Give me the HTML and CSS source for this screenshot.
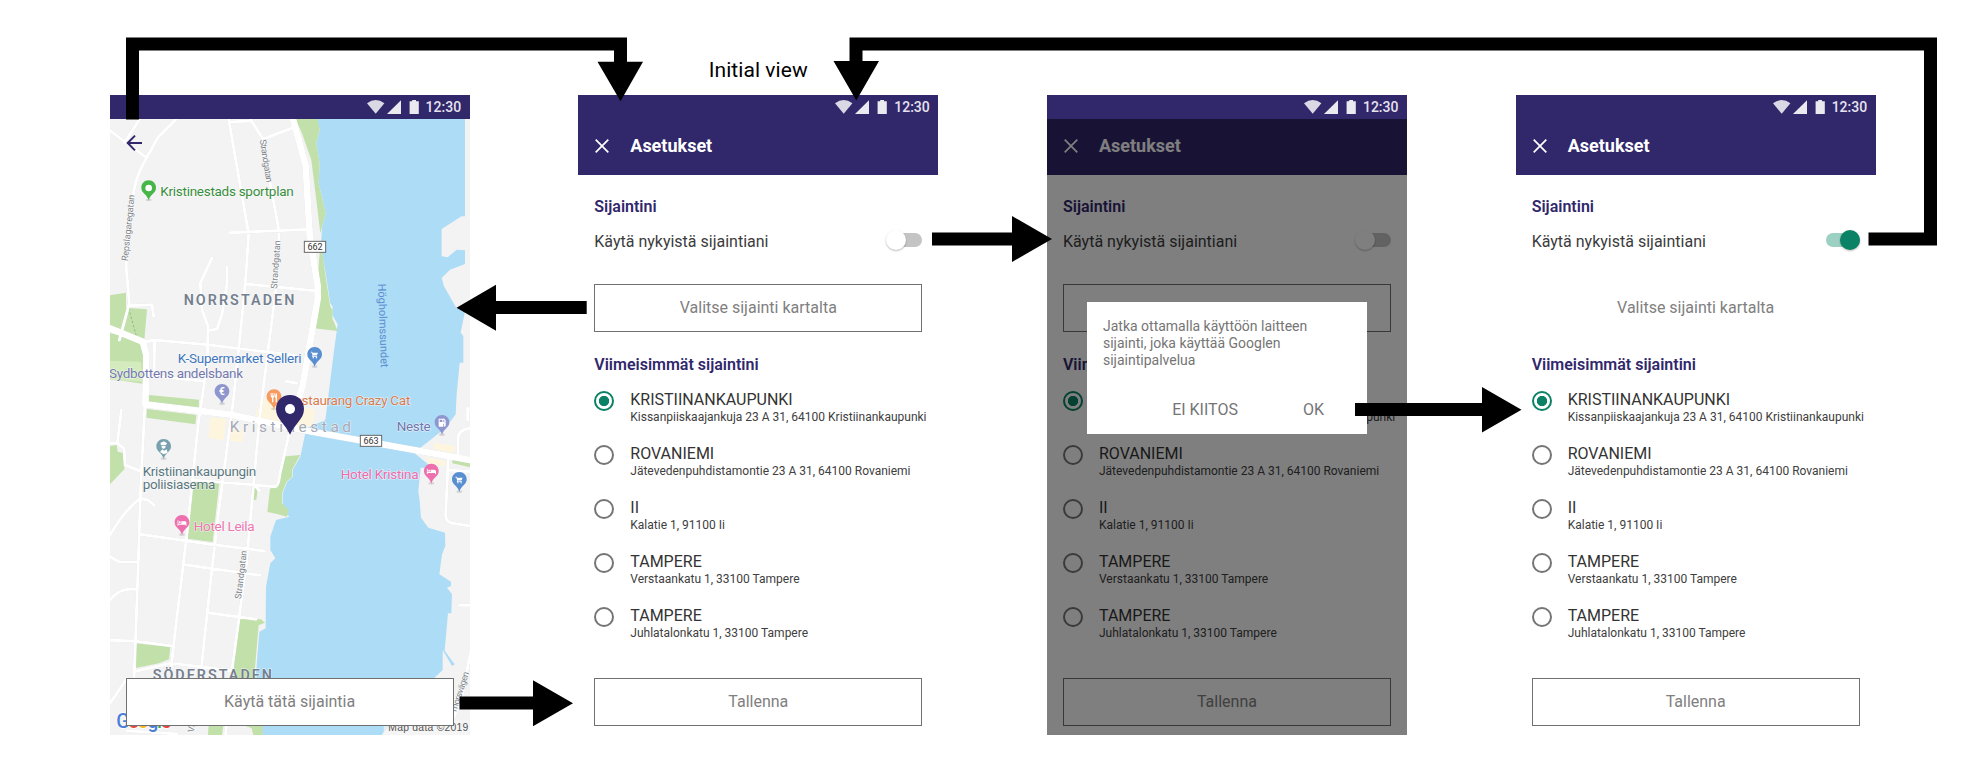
FILE: index.html
```html
<!DOCTYPE html>
<html lang="fi">
<head>
<meta charset="utf-8">
<title>Asetukset – Initial view</title>
<link rel="stylesheet" href="styles.css">
</head>
<body>
<svg width="0" height="0" class="defs">
  <defs>
    <symbol id="status" viewBox="0 0 52 14">
      <path d="M0 3.2Q8.7-3 17.4 3.2L8.7 13.7z" fill="#fff" opacity=".82"/>
      <path d="M20 14L34 .3V14z" fill="#fff" opacity=".9"/>
      <path d="M42.6 1.2h2.600V0h3.800v1.200h2.800V14h-9.200z" fill="#fff" opacity=".9"/>
    </symbol>
    <symbol id="close" viewBox="0 0 14 14"><path d="M.7.7l12.6 12.6M13.3.7L.7 13.3" stroke="#fff" stroke-width="1.7" fill="none"/></symbol>
    <symbol id="poi" viewBox="0 0 46 64" overflow="visible"><ellipse cx="23" cy="60" rx="9" ry="4" fill="#000" opacity=".12"/><path d="M23 1C10 1 1 11 1 23c0 17 17 19 22 38C28 42 45 40 45 23 45 11 36 1 23 1z"/></symbol>
    <symbol id="cart" viewBox="0 0 24 24"><path d="M1 3h4l1.500 3H22l-3.500 8H8.500L8 16h12v2H5l1.500-4.500L3.500 5H1z" fill="#fff"/><circle cx="8.500" cy="20.500" r="2" fill="#fff"/><circle cx="17.500" cy="20.500" r="2" fill="#fff"/></symbol>
    <symbol id="bed" viewBox="0 0 28 18"><path d="M0 1h3v10h9V4h11q5 0 5 5v8h-3v-3H3v3H0z" fill="#fff"/><circle cx="7.500" cy="7" r="3" fill="#fff"/></symbol>
  </defs>
</svg>

<main class="board">
  <section class="phone phone-map">
    <svg class="map" viewBox="29 297 1080 1848" preserveAspectRatio="none">
      <rect x="29" y="297" width="1080" height="1848" fill="#f3f3f3"/>
      <path class="water" d="M650 297l8 33-10 40 10 60-3 60 21 90-11 40-3 60 14 80 14 90 7 10-1 25 16 28-12 87-15 120-10 80-57 25-18 85-23 40v20l-17 17-13 33v50l20 20-40 10-17 50v40l15 25-15 15-13 70-1 125-19 10-10 125 22 205h348l10-25 143-155 37-35 0-60 28 48 8-5-30-41 10-112h10l2-57-15-20 12-5v-13l-35-22 8-60 10-25-1-40-50-15-22-30-4-50-4-30 7-70 35 0-55-45 45-35 50-40 30-40 3-60 9-95h11v-80l-8-10 15-74h-28l-37-65-7-25 25-25 45-17v-41l-25-2-27 23-18-3v-82l60-38h10V297z"/>
      <g class="park">
        <path d="M585 297h67l6 33-10 40 10 60-3 60 21 90-11 40-5 20-12-100-15-120-28-80zM661 660l15 110 14 90 7 10-1 25 16 38-72-8z"/>
        <path d="M29 826l48-8v45l63 5-8 92-60-25-43-10zM29 940l60 12 45 30-2 110-103-15zM146 1125l150 14-1 25-150-16zM140 1167l148 18-3 28-147-20zM29 1278l20-3 3 20 20 5v48l-43 45zM275 1383l82 5-20 178-76-10zM455 1397l18 3-5 40-15-2zM555 1309l45-4-25 45v20l-17 17-13 33v30l20 20-5 20-30-8-29-6 8-70 25-10z"/>
        <path d="M106 1870l104 10-4 38-30 12-70 14zM412 1795l70 3 12 10-19 8-12 140 24 150v39h-28l-5-20-27-10-30-160z"/>
        <path d="M325 2110h45l-5 35h-42zM1056 1320l54 10v12l-54-12z"/>
      </g>
      <path d="M29 1022l93 3 6 60-99-5z" fill="#d3ebbd"/>
      <path d="M484 1135l162 35-12 48-80 12-95-30zM330 1192l48 4-8 65-45-7zM395 1228l35 4-3 35-40-5zM1000 1268l65 10-5 22-60-12zM980 1312l58 12-5 15-50-5z" fill="#fdf5dd"/>
      <path d="M85 865l25 90" stroke="#8fbb7b" stroke-width="3" stroke-dasharray="7 6" fill="none"/>
      <g class="road">
        <path d="M118 297L73 368M29 332l105 78M228 297l-55 55-43 78q-28 50-33 110-24 170-18 220l8 90-30 110M385 297l60 345-8 120-8 90-30 290-45 340-23 200-32 300M450 297l38 60 88-33M388 306l60-3M488 357l20 125 28 150-3 130-30 230-25 200-40 440-42 310-25 250M388 638l245-10M335 714l-35 75 5 80 18 50-2 110-27 180-35 340-35 290-12 110M380 742v50l-15 90-15 45-28 5M438 792l205 20M85 857l70-3 5 35M130 966l33-6 160 14 260 32M163 960l-2 108 145 15M134 1150l-12 230-10 300-12 330M63 1170l-12 100 20 15 3 50 45 18M29 1270h20M557 1084l33 6M275 1380l250 20q10-2 14-40l30-130M119 1435l25 6 18 15M119 1435q-50 40-90 110M119 1543l210 30 163 20M254 1634l225 32M29 1610l28 16h56M29 1740q30-38 75-32M29 1861l70 2 113 14M100 1955l110-25 90 10 95 12M322 1778l145 20M80 1975l-51 75M467 1400l10 12M1044 1310l-8 175q0 20 20 25l54 8M1110 1225q-40 5-37 35v55M1046 1350l64 5M1078 1756h32M1110 1900l-25 130-30 75M80 2132l150 10M1110 1170l-8-5v35"/>
        <path class="r-main" d="M578 297l38 140 12 210 24 150v40l-45 260-40 130"/>
        <path class="r-main" d="M29 925l98 40 11 40-3 148 250 30 250 52 475 85"/>
      </g>
      <g class="labels">
        <text class="street" transform="translate(478 360) rotate(81)" textLength="130">Strandgatan</text>
        <text class="street" transform="translate(82 724) rotate(-84)" textLength="200">Repslagaregatan</text>
        <text class="street" transform="translate(530 807) rotate(-86)" textLength="146">Strandgatan</text>
        <text class="street" transform="translate(422 1738) rotate(-83)" textLength="146">Strandgatan</text>
        <text class="street" transform="translate(1068 2076) rotate(-72)" textLength="124">morsvägen</text>
        <text class="street" transform="translate(280 2138) rotate(-80)">Vä</text>
        <text class="sea" transform="translate(833 791) rotate(88)" textLength="252">Högholmssundet</text>
        <text x="180" y="527" fill="#388e3c" textLength="400">Kristinestads sportplan</text>
        <text class="area" x="250" y="854" textLength="332">NORRSTADEN</text>
        <text class="area" x="157" y="1980" textLength="358">SÖDERSTADEN</text>
        <text x="232" y="1028" fill="#3f76bd" textLength="372">K-Supermarket Selleri</text>
        <text x="26" y="1074" fill="#7478ae" textLength="402">Sydbottens andelsbank</text>
        <text x="559" y="1154" fill="#d77c50" textLength="371">Restaurang Crazy Cat</text>
        <text x="388" y="1237" class="city" textLength="364">Kristinestad</text>
        <text x="889" y="1232" fill="#7076ad" textLength="102">Neste</text>
        <text x="127" y="1368" fill="#5b7880" textLength="341">Kristiinankaupungin</text>
        <text x="127" y="1407" fill="#5b7880" textLength="218">poliisiasema</text>
        <text x="721" y="1378" fill="#ec6ba9" textLength="234">Hotel Kristina</text>
        <text x="280" y="1532" fill="#ec77b1" textLength="183">Hotel Leila</text>
      </g>
      <g class="shields">
        <rect x="612" y="664" width="64" height="33"/><text x="644" y="690">662</text>
        <rect x="780" y="1246" width="64" height="33"/><text x="812" y="1272">663</text>
      </g>
      <use href="#poi" x="122" y="480" width="46" height="64" fill="#47b648"/><circle cx="145" cy="504" r="10" fill="#fff"/>
      <use href="#poi" x="620" y="980" width="46" height="64" fill="#598fd0"/><use href="#cart" x="630" y="992" width="25" height="25"/>
      <use href="#poi" x="342" y="1091" width="46" height="64" fill="#8f96ce"/><text class="euro" x="365" y="1125">€</text>
      <use href="#poi" x="498" y="1107" width="46" height="64" fill="#f89b60"/><path d="M511 1119v8q0 5 4 6v14h4v-14q4-1 4-6v-8h-3v8h-2v-8h-2v8h-2v-8zM526 1133v14h4v-28q-6 2-6 14z" fill="#fff"/>
      <use href="#poi" x="1002" y="1184" width="46" height="64" fill="#8f96ce"/><path fill-rule="evenodd" d="M1015 1196h14v9l3 3v-7l-4-4 2-2 6 6v16q-1 4-5 2v-8h-2v9h-14zm3 3v7h8v-7z" fill="#fff"/>
      <use href="#poi" x="167" y="1256" width="46" height="64" fill="#78a0ae"/><path d="M180 1269l11-5 9 6-3 5h-15zM183 1277h13q0 9-7 9-6-1-6-9zM179 1296l7-8 5 4 8-4 3 10-12 5z" fill="#fff"/>
      <use href="#poi" x="970" y="1330" width="46" height="64" fill="#ed70af"/><use href="#bed" x="979" y="1345" width="28" height="18"/>
      <use href="#poi" x="1054" y="1355" width="46" height="64" fill="#598fd0"/><use href="#cart" x="1064" y="1367" width="25" height="25"/>
      <use href="#poi" x="222" y="1484" width="46" height="64" fill="#ed70af"/><use href="#bed" x="231" y="1500" width="28" height="18"/>
      <path d="M569 1125c-24 0-42 18-42 42 0 30 27 43 42 77 15-34 42-47 42-77 0-24-18-42-42-42z" fill="#31276b"/><circle cx="569" cy="1167" r="15" fill="#fff"/>
      <text class="logo" x="48" y="2124" textLength="164"><tspan fill="#4a7fd8">G</tspan><tspan fill="#e5453a">o</tspan><tspan fill="#f4b821">o</tspan><tspan fill="#4a7fd8">g</tspan><tspan fill="#3ba457">l</tspan><tspan fill="#e5453a">e</tspan></text>
      <rect x="850" y="2100" width="259" height="45" fill="#f5f5f5" opacity=".7"/>
      <text class="credit" x="864" y="2134" textLength="240">Map data ©2019</text>
      <path d="M125 369H81M104 347l-22 22 22 22" stroke="#31276b" stroke-width="6" fill="none"/>
    </svg>
    <header class="status"><svg><use href="#status"/></svg><span>12:30</span></header>
    <div class="map-foot"><button class="btn">Käytä tätä sijaintia</button></div>
  </section>

  <section class="phone">
    <header class="status"><svg><use href="#status"/></svg><span>12:30</span></header>
    <div class="appbar"><svg><use href="#close"/></svg><h1>Asetukset</h1></div>
    <div class="content">
      <h2>Sijaintini</h2>
      <div class="row"><span>Käytä nykyistä sijaintiani</span><i class="toggle"></i></div>
      <button class="btn pick">Valitse sijainti kartalta</button>
      <h2>Viimeisimmät sijaintini</h2>
      <ul class="places">
        <li><i class="radio on"></i><div><b>KRISTIINANKAUPUNKI</b><small>Kissanpiiskaajankuja 23 A 31, 64100 Kristiinankaupunki</small></div></li>
        <li><i class="radio"></i><div><b>ROVANIEMI</b><small>Jätevedenpuhdistamontie 23 A 31, 64100 Rovaniemi</small></div></li>
        <li><i class="radio"></i><div><b>II</b><small>Kalatie 1, 91100 Ii</small></div></li>
        <li><i class="radio"></i><div><b>TAMPERE</b><small>Verstaankatu 1, 33100 Tampere</small></div></li>
        <li><i class="radio"></i><div><b>TAMPERE</b><small>Juhlatalonkatu 1, 33100 Tampere</small></div></li>
      </ul>
      <button class="btn">Tallenna</button>
    </div>
  </section>

  <section class="phone">
    <header class="status"><svg><use href="#status"/></svg><span>12:30</span></header>
    <div class="appbar"><svg><use href="#close"/></svg><h1>Asetukset</h1></div>
    <div class="content">
      <h2>Sijaintini</h2>
      <div class="row"><span>Käytä nykyistä sijaintiani</span><i class="toggle"></i></div>
      <button class="btn pick"></button>
      <h2>Viimeisimmät sijaintini</h2>
      <ul class="places">
        <li><i class="radio on"></i><div><b>KRISTIINANKAUPUNKI</b><small>Kissanpiiskaajankuja 23 A 31, 64100 Kristiinankaupunki</small></div></li>
        <li><i class="radio"></i><div><b>ROVANIEMI</b><small>Jätevedenpuhdistamontie 23 A 31, 64100 Rovaniemi</small></div></li>
        <li><i class="radio"></i><div><b>II</b><small>Kalatie 1, 91100 Ii</small></div></li>
        <li><i class="radio"></i><div><b>TAMPERE</b><small>Verstaankatu 1, 33100 Tampere</small></div></li>
        <li><i class="radio"></i><div><b>TAMPERE</b><small>Juhlatalonkatu 1, 33100 Tampere</small></div></li>
      </ul>
      <button class="btn">Tallenna</button>
    </div>
    <div class="scrim">
      <div class="dialog">
        <p>Jatka ottamalla käyttöön laitteen sijainti, joka käyttää Googlen sijaintipalvelua</p>
        <div class="actions"><span>EI KIITOS</span><span>OK</span></div>
      </div>
    </div>
  </section>

  <section class="phone">
    <header class="status"><svg><use href="#status"/></svg><span>12:30</span></header>
    <div class="appbar"><svg><use href="#close"/></svg><h1>Asetukset</h1></div>
    <div class="content">
      <h2>Sijaintini</h2>
      <div class="row"><span>Käytä nykyistä sijaintiani</span><i class="toggle on"></i></div>
      <button class="btn pick plain">Valitse sijainti kartalta</button>
      <h2>Viimeisimmät sijaintini</h2>
      <ul class="places">
        <li><i class="radio on"></i><div><b>KRISTIINANKAUPUNKI</b><small>Kissanpiiskaajankuja 23 A 31, 64100 Kristiinankaupunki</small></div></li>
        <li><i class="radio"></i><div><b>ROVANIEMI</b><small>Jätevedenpuhdistamontie 23 A 31, 64100 Rovaniemi</small></div></li>
        <li><i class="radio"></i><div><b>II</b><small>Kalatie 1, 91100 Ii</small></div></li>
        <li><i class="radio"></i><div><b>TAMPERE</b><small>Verstaankatu 1, 33100 Tampere</small></div></li>
        <li><i class="radio"></i><div><b>TAMPERE</b><small>Juhlatalonkatu 1, 33100 Tampere</small></div></li>
      </ul>
      <button class="btn">Tallenna</button>
    </div>
  </section>

  <svg class="arrows" viewBox="0 0 1985 775">
    <g fill="none" stroke="#000" stroke-width="13">
      <path d="M132.500 119.500V44H620.500V63"/>
      <path d="M1868.500 239H1930.500V44H856V63"/>
      <path d="M932 239H1014M586.700 307.500H494M459.500 703H535M1355 409.500H1484"/>
    </g>
    <path d="M597.500 61.700h45.500l-22.500 39.500zM833.500 61h45.500l-22.700 39.500zM1012 216l40 23-40 23zM496 284.700l-39.500 23 39.500 23zM533 680.300l40 23-40 23zM1482 387l39.500 22.700-39.500 22.800z"/>
    <text x="708.700" y="77" textLength="99">Initial view</text>
  </svg>
</main>
</body>
</html>
```

FILE: styles.css
```css
* { box-sizing: border-box; }
body { margin: 0; background: #fff; font-family: Roboto, "Liberation Sans", sans-serif; }
.defs { position: absolute; }
.board { position: relative; width: 1985px; height: 775px; padding: 95px 0 0 109.600px; display: flex; gap: 108.700px; overflow: hidden; }
.phone { position: relative; flex: none; width: 360px; height: 640px; display: flex; flex-direction: column; background: #fff; }
.status { position: relative; height: 24px; flex: none; background: #31276b; display: flex; justify-content: flex-end; align-items: center; padding-right: 8.500px; gap: 7px; color: #e6e3ee; font-size: 14px; font-weight: 500; }
.status svg { width: 52px; height: 14px; }
.appbar { height: 56px; flex: none; background: #31276b; display: flex; align-items: center; padding: 0 17px; padding-bottom: 2px; gap: 21px; color: #fff; }
.appbar svg { width: 14px; height: 14px; }
.appbar h1 { margin: 0; font-size: 18px; line-height: 24px; font-weight: 700; }
.content { flex: 1; display: flex; flex-direction: column; padding: 20px 16px 9px; }
h2 { margin: 0; font-size: 16px; line-height: 24px; font-weight: 600; color: #31276b; }
.row { display: flex; justify-content: space-between; align-items: center; height: 24px; margin-top: 10px; font-size: 16px; color: #3c3c3c; }
.toggle { position: relative; width: 34px; height: 14px; margin-bottom: 2px; border-radius: 7px; background: #c4c4c4; }
.toggle::after { content: ""; position: absolute; left: -2px; top: -3px; width: 20px; height: 20px; border-radius: 50%; background: #fff; box-shadow: 0 1px 2px rgba(0,0,0,.28); }
.toggle.on { background: #9bd0c2; }
.toggle.on::after { left: 14px; background: #0b8265; }
.btn { width: 328px; height: 48px; flex: none; border: 1px solid #707070; background: #fff; padding: 0; font: 400 16px/24px Roboto, sans-serif; color: #808080; }
.btn.pick { margin: 31px 0 21px; }
.btn.plain { border-color: transparent; }
.places { list-style: none; margin: 13px 0 36px; padding: 0; display: flex; flex-direction: column; gap: 18px; }
.places li { display: flex; gap: 16px; height: 36px; }
.places div { display: flex; flex-direction: column; white-space: nowrap; }
.places b { font-size: 16px; line-height: 20px; font-weight: 400; color: #333; }
.places small { font-size: 12px; line-height: 14px; color: #404040; }
.radio { width: 20px; height: 20px; margin-top: 1px; border: 2px solid #757575; border-radius: 50%; flex: none; }
.radio.on { border-color: #0b8265; background: radial-gradient(circle, #0b8265 4.800px, transparent 5.500px); }
.scrim { position: absolute; inset: 24px 0 0; background: rgba(0,0,0,.5); display: flex; justify-content: center; padding-top: 183px; }
.dialog { width: 280px; height: 132px; background: #fff; padding: 16px; display: flex; flex-direction: column; justify-content: space-between; color: #757575; }
.dialog p { margin: 0; width: 225px; font-size: 14px; line-height: 17px; }
.actions { display: flex; justify-content: flex-end; gap: 65px; padding-right: 27px; font-size: 16px; line-height: 16px; }
.map { position: absolute; left: 0; top: 24px; width: 360px; height: 616px; }
.map-foot { position: relative; margin-top: auto; padding: 0 16px 9px; }
.map .water { fill: #addcf6; }
.map .park { fill: #c2e0aa; }
.road { fill: none; stroke-linecap: round; stroke-linejoin: round; filter: drop-shadow(0 0 1.500px rgba(0,0,0,.12)); }
.road path { stroke: #fff; stroke-width: 9; }
.road .r-main { stroke-width: 20; }
.labels text { font-size: 40.500px; stroke: #fff; stroke-width: 3px; stroke-opacity: .75; paint-order: stroke; }
.labels .street { font-size: 27px; fill: #7c8389; }
.labels .sea { font-size: 33px; fill: #5b8fd0; stroke: none; }
.labels .area { font-size: 43px; font-weight: 600; fill: #74808f; }
.labels .city { font-size: 46px; fill: #a6a9b4; }
.shields rect { fill: #fff; stroke: #666; stroke-width: 3; }
.shields text { font-size: 27px; fill: #333; text-anchor: middle; }
.euro { font-size: 30px; font-weight: 700; fill: #fff; text-anchor: middle; }
.logo { font-size: 58px; font-weight: 500; stroke: #fff; stroke-width: 4px; paint-order: stroke; }
.credit { font-family: "Liberation Sans", sans-serif; font-size: 31px; fill: #555; }
.arrows { position: absolute; left: 0; top: 0; width: 1985px; height: 775px; }
.arrows text { font-size: 21px; }
```
